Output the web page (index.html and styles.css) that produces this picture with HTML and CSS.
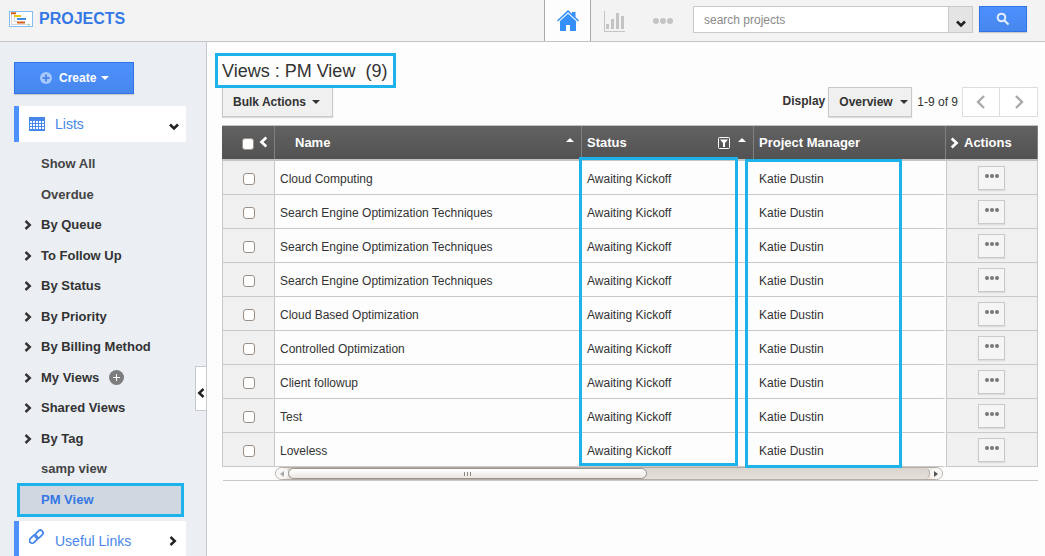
FILE: index.html
```html
<!DOCTYPE html>
<html lang="en">
<head>
<meta charset="utf-8">
<title>Projects</title>
<link rel="stylesheet" href="styles.css">
</head>
<body>
<svg class="defs" aria-hidden="true">
  <symbol id="right" viewBox="0 0 8 10"><path d="M1.5 1 5.8 5 1.5 9" fill="none" stroke="currentColor" stroke-width="2.4"/></symbol>
  <symbol id="left" viewBox="0 0 8 10"><path d="M6.5 1 2.2 5 6.5 9" fill="none" stroke="currentColor" stroke-width="2.4"/></symbol>
  <symbol id="down" viewBox="0 0 10 8"><path d="M1 1.5 5 5.5 9 1.5" fill="none" stroke="currentColor" stroke-width="2.6"/></symbol>
</svg>
<header class="topbar">
  <div class="brand">
    <svg class="brand-icon" viewBox="0 0 24 16" aria-hidden="true">
      <rect x=".5" y=".5" width="23" height="15" fill="#fff" stroke="#86bdf0"/>
      <path d="M2.5 3v10.5H20M5.500 4.500v6h3" fill="none" stroke="#ccc" stroke-width=".8"/>
      <path d="M2 1.200h5v2H2zM8 10.500h8v2H8z" fill="#d2601a"/>
      <path d="M5 4h7v2H5z" fill="#f0c419"/>
      <path d="M8 7h9v2H8z" fill="#3d8de5"/>
      <path d="M19 13h2v1.500h-2z" fill="#9fd6a5"/>
    </svg>
    <span>PROJECTS</span>
  </div>
  <nav class="tabs">
    <button class="tab tab-active" aria-label="Home"><svg width="22" height="22" viewBox="0 0 22 22"><path fill="#3690fb" d="M11 0 0 10.500l1 1L11 2.300l10 9.200 1-1-3.500-3.400V2H15v1.800z"/><path fill="#3690fb" d="M11 3.700 3 11v10h6v-6h4v6h6V11z"/></svg></button>
    <button class="tab" aria-label="Reports"><svg width="22" height="22" viewBox="0 0 22 22" fill="#c4c4c4"><path d="M0 1h1v20h20v1H0zM2 14h3v5H2zM7 9h3v10H7zM12 3h3v16h-3zM17 6h3v13h-3z"/></svg></button>
    <button class="tab" aria-label="More"><svg width="22" height="8" viewBox="0 0 22 8" fill="#c4c4c4"><circle cx="4" cy="4" r="3"/><circle cx="11" cy="4" r="3"/><circle cx="18" cy="4" r="3"/></svg></button>
  </nav>
  <form class="search">
    <input class="search-input" type="text" placeholder="search projects" aria-label="Search projects">
    <button class="search-menu" type="button" aria-label="Search options"><svg class="chev-down"><use href="#down"/></svg></button>
    <button class="search-go" type="button" aria-label="Search"><svg width="14" height="14" viewBox="0 0 14 14" fill="none" stroke="#e4eeff" stroke-width="2"><circle cx="5.500" cy="5.500" r="3.800"/><path d="m8.200 8.200 4.300 4.300"/></svg></button>
  </form>
</header>
<div class="layout">
  <aside class="sidebar">
    <button class="create"><svg width="12" height="12" viewBox="0 0 12 12"><circle cx="6" cy="6" r="6" fill="#a6c8ff"/><path d="M6 2.500v7M2.500 6h7" stroke="#4a88ee" stroke-width="2"/></svg><span>Create</span><span class="caret"></span></button>
    <a class="section" href="#">
      <svg class="section-icon" width="16" height="14" viewBox="0 0 16 14"><path fill="#4786ea" d="M0 0h16v14H0z"/><path fill="#fff" d="M1 4h2v2H1zM4 4h2v2H4zM7 4h2v2H7zM10 4h2v2h-2zM13 4h2v2h-2zM1 7h2v2H1zM4 7h2v2H4zM7 7h2v2H7zM10 7h2v2h-2zM13 7h2v2h-2zM1 10h2v2H1zM4 10h2v2H4zM7 10h2v2H7zM10 10h2v2h-2zM13 10h2v2h-2z"/></svg>
      <span class="section-name">Lists</span><svg class="chev-down section-down"><use href="#down"/></svg>
    </a>
    <ul class="views">
      <li><a class="leaf" href="#">Show All</a></li>
      <li><a class="leaf" href="#">Overdue</a></li>
      <li><svg class="chev"><use href="#right"/></svg><a href="#">By Queue</a></li>
      <li><svg class="chev"><use href="#right"/></svg><a href="#">To Follow Up</a></li>
      <li><svg class="chev"><use href="#right"/></svg><a href="#">By Status</a></li>
      <li><svg class="chev"><use href="#right"/></svg><a href="#">By Priority</a></li>
      <li><svg class="chev"><use href="#right"/></svg><a href="#">By Billing Method</a></li>
      <li><svg class="chev"><use href="#right"/></svg><a href="#">My Views</a><button class="add" aria-label="Add view"><svg width="15" height="15" viewBox="0 0 15 15"><circle cx="7.500" cy="7.500" r="7.500" fill="#7d7d7d"/><path d="M7.500 4v7M4 7.500h7" stroke="#fff"/></svg></button></li>
      <li><svg class="chev"><use href="#right"/></svg><a href="#">Shared Views</a></li>
      <li><svg class="chev"><use href="#right"/></svg><a href="#">By Tag</a></li>
      <li><a class="leaf" href="#">samp view</a></li>
      <li class="current"><a href="#">PM View</a></li>
    </ul>
    <a class="section" href="#">
      <svg class="section-icon" width="16" height="20" viewBox="0 0 16 20" fill="none" stroke="#4786ea" stroke-width="1.800"><rect x="5.500" y="2.500" width="9" height="5.400" rx="2.700" transform="rotate(-45 10 5.200)"/><rect x="0" y="7.500" width="9" height="5.400" rx="2.700" transform="rotate(-45 4.500 10.200)"/></svg>
      <span class="section-name">Useful Links</span><svg class="chev section-right"><use href="#right"/></svg>
    </a>
    <button class="collapse" aria-label="Collapse sidebar"><svg class="chev"><use href="#left"/></svg></button>
  </aside>
  <main class="main">
    <h1 class="title">Views : PM View&nbsp; (9)</h1>
    <div class="toolbar">
      <button class="bulk">Bulk Actions<span class="caret"></span></button>
      <label class="display-label" for="display">Display</label>
      <div class="picker"><select id="display"><option>Overview</option></select><span class="caret"></span></div>
      <span class="range">1-9 of 9</span>
      <div class="pager">
        <button aria-label="Previous page"><svg width="10" height="14" viewBox="0 0 10 14"><path d="M8 1 2 7l6 6" fill="none" stroke="#aaa" stroke-width="2.400"/></svg></button>
        <button aria-label="Next page"><svg width="10" height="14" viewBox="0 0 10 14"><path d="m2 1 6 6-6 6" fill="none" stroke="#aaa" stroke-width="2.400"/></svg></button>
      </div>
    </div>
    <table class="projects">
      <colgroup><col class="col-check"><col><col class="col-status"><col class="col-manager"><col class="col-actions"></colgroup>
      <thead>
        <tr>
          <th><div class="head head-check"><input type="checkbox" aria-label="Select all"><svg class="head-chev"><use href="#left"/></svg></div></th>
          <th><div class="head head-name">Name<span class="sort"></span></div></th>
          <th><div class="head">Status<svg class="filter" width="12" height="12" viewBox="0 0 12 12"><rect x=".5" y=".5" width="11" height="11" rx="1" fill="none" stroke="#fff"/><path d="M2 2.500h8L7 6v4H5V6z" fill="#fff"/></svg><span class="sort"></span></div><span class="mark mark-status"></span></th>
          <th><div class="head">Project Manager</div><span class="mark mark-manager"></span></th>
          <th><div class="head head-actions"><svg class="head-chev"><use href="#right"/></svg>Actions</div></th>
        </tr>
      </thead>
      <tbody id="rows"></tbody>
    </table>
    <div class="scroll">
      <div class="scrollbar"><span class="arrow arrow-left"></span><span class="track"><span class="thumb"><i></i><i></i><i></i></span></span><span class="arrow arrow-right"></span></div>
    </div>
  </main>
</div>
<script src="app.js"></script>
</body>
</html>
```
FILE: styles.css
```css
* { box-sizing: border-box; }
body { margin: 0; height: 100vh; overflow: hidden; display: flex; flex-direction: column; background: #fdfdfd; color: #333; font: 12px/16px "Liberation Sans", Arial, sans-serif; }
button, input, select { margin: 0; padding: 0; font: inherit; color: inherit; border-radius: 0; }
button { display: flex; align-items: center; }
svg { flex: none; display: block; }
a { color: inherit; text-decoration: none; }
.defs { position: absolute; width: 0; height: 0; }
.caret { border: 5px solid transparent; border-top-color: currentColor; border-bottom: 0; }
.chev { width: 8px; height: 10px; }
.chev-down { width: 10px; height: 8px; }

.topbar { display: flex; height: 42px; flex: none; background: #f3f3f3; border-bottom: 1px solid #c4c4c4; }
.brand { display: flex; flex: 1; align-items: center; gap: 6px; padding: 0 0 3px 9px; color: #3578e5; font-size: 16px; font-weight: bold; }
.brand-icon { width: 24px; height: 16px; }
.tabs { display: flex; }
.tab { width: 48px; justify-content: center; background: none; border: 0; }
.tab-active { width: 47px; background: #fdfdfd; border: solid #aaa; border-width: 0 1px; }
.search { display: flex; padding: 6px 18px 0 6px; }
.search-input { width: 256px; height: 27px; padding: 0 10px; background: #fff; border: 1px solid #c9c9c9; }
.search-input::placeholder { color: #8a8a8a; opacity: 1; }
.search-menu { width: 24px; height: 27px; justify-content: center; padding-top: 8px; background: #e4e4e4; border: 1px solid #c9c9c9; border-left: 0; color: #222; }
.search-go { width: 48px; height: 26px; margin-left: 6px; justify-content: center; background: linear-gradient(#4d90fe, #4787ed); border: 1px solid #2f74e8; box-shadow: 0 1px 1px #ccc; }

.layout { display: flex; flex: 1; min-height: 0; }
.sidebar { position: relative; width: 207px; flex: none; padding: 20px 20px 0 14px; background: #ebeff4; border-right: 1px solid #c6c9cd; }
.create { width: 120px; height: 32px; gap: 5px; padding-left: 25px; color: #fff; font-weight: bold; background: linear-gradient(#4d90fe, #4787ed); border: 1px solid #2f74e8; box-shadow: 0 1px 1px #ccc; }
.create span:first-of-type { margin-left: 2px; }
.create .caret { border-width: 4px 4px 0; }
.section { display: flex; align-items: center; height: 36px; padding: 0 7px 0 10px; background: #fff; border-left: 5px solid #4d90fe; color: #4786ea; font-size: 14px; }
.create + .section { margin-top: 12px; }
.section-icon { width: 16px; margin-right: 10px; }
.views + .section { padding-top: 4px; }
.views + .section .section-icon { margin-bottom: 4px; }
.section-name { flex: 1; }
.section-down, .section-right { color: #222; }
.section-down { margin-top: 6px; }
.section-right { margin-right: 2px; }
.views { list-style: none; margin: 0 2px 4px 3px; padding: 6px 0 0; font-size: 13px; font-weight: bold; color: #333; }
.views li { display: flex; align-items: center; height: 30px; padding: 2px 0 0 7px; }
.views li:nth-child(even) { height: 31px; }
.views .chev { margin-right: 9px; }
.leaf { margin-left: 17px; color: #444; }
.views li.current { height: 34px; padding: 0 0 0 21px; color: #3578e5; background: #d1d7e0; border: 3px solid #1cb2ea; }
.add { margin-left: 10px; background: none; border: 0; }
.collapse { position: absolute; right: 0; top: 324px; width: 11px; height: 45px; justify-content: center; padding-top: 8px; color: #222; background: #fff; border: 1px solid #c6c9cd; border-right: 0; }

.main { flex: 1; min-width: 0; padding: 11px 7px 0 15px; }
.title { position: relative; z-index: 1; width: max-content; margin: 0 0 -1px -7px; height: 35px; padding: 0 6px 0 4px; background: #fdfdfd; border: 3px solid #1cb2ea; font-size: 18px; line-height: 31px; font-weight: normal; }
.toolbar { display: flex; margin-bottom: 8px; }
.bulk { height: 30px; gap: 6px; padding: 0 12px 0 10px; font-weight: bold; background: #f0f0f0; border: 1px solid #c9c9c9; box-shadow: 0 1px 1px #ddd; }
.bulk .caret, .picker .caret { border-width: 4px 4px 0; }
.display-label { margin-left: auto; line-height: 28px; font-weight: bold; }
.picker { position: relative; margin-left: 3px; }
.picker select { display: block; width: 84px; height: 30px; padding-left: 10px; appearance: none; font-weight: bold; background: #f0f0f0; border: 1px solid #c9c9c9; box-shadow: 0 1px 1px #ddd; }
.picker .caret { position: absolute; right: 4px; top: 13px; pointer-events: none; }
.range { margin: 0 4px 0 5px; line-height: 30px; }
.pager { display: flex; }
.pager button { width: 38px; height: 30px; justify-content: center; background: #fff; border: 1px solid #ddd; }
.pager button + button { border-left: 0; }

.projects { width: 100%; table-layout: fixed; border-spacing: 0; }
.col-check { width: 53px; }
.col-status { width: 172px; }
.col-manager { width: 192px; }
.col-actions { width: 92px; }
th { position: relative; padding: 0; height: 36px; font-size: 13px; text-align: left; color: #fff; background: linear-gradient(#626262, #525252); border: solid #c4c4c4; border-width: 1px 0 2px; }
.head { display: flex; align-items: center; height: 33px; padding: 0 7px 0 5px; border-right: 1px solid #818181; }
.head-name { padding-left: 20px; }
.head-check { padding: 3px 0 0 20px; }
.head-chev { width: 9px; height: 12px; margin: 0 9px 4px 5px; }
.head-actions { padding-left: 0; }
.head-actions .head-chev { margin: 0 5px 0 4px; }
.sort { margin: 0 0 5px auto; border: 4px solid transparent; border-bottom-color: #fff; border-top: 0; }
.filter { margin: 0 8px 0 auto; }
.filter + .sort { margin-left: 0; }
td { height: 34px; padding: 3px 0 0 5px; background: #fdfdfd; border-bottom: 1px solid #c9c9c9; }
td:first-child { padding: 3px 0 0 20px; background: #f0f0f0; border-right: 1px solid #c9c9c9; border-left: 1px solid #c9c9c9; }
td:nth-child(4) { border-right: 3px solid #fdfdfd; }
td:last-child { padding: 0 0 0 31px; background: #f0f0f0; border-left: 1px solid #c9c9c9; border-right: 1px solid #c9c9c9; }
input[type="checkbox"] { display: block; flex: none; width: 12px; height: 12px; appearance: none; background: #fff; border: 1px solid #9a8f86; border-radius: 3px; }
.more { width: 27px; height: 24px; justify-content: center; padding-bottom: 3px; background: #f5f5f5; border: 1px solid #c9c9c9; box-shadow: 0 1px 1px #ddd; }
.mark { position: absolute; z-index: 1; border: 3px solid #1cb2ea; pointer-events: none; }
.mark-status { left: -3px; top: 31px; width: 159px; height: 309px; }
.mark-manager { left: -9px; top: 33px; width: 157px; height: 309px; }

.scroll { margin-left: 1px; padding: 0 95px 0 52px; border-bottom: 1px solid #c9c9c9; }
.scrollbar { display: flex; height: 13px; background: #ece9e5; border: 1px solid #b5aca4; border-radius: 7px; }
.track { flex: 1; background: linear-gradient(#d9d4ce, #e4e0db); border-right: 1px solid #b5aca4; border-radius: 0 7px 7px 0; }
.thumb { display: flex; align-items: center; justify-content: center; gap: 2px; width: 56%; height: 11px; background: linear-gradient(#fff, #eae7e3); border: 1px solid #9a918a; border-radius: 6px; }
.thumb i { width: 1px; height: 4px; background: #8d857e; }
.arrow { width: 12px; background: #f7f6f4; border-radius: 6px; }
.arrow::before { content: ""; display: block; margin: 3px 0 0 4px; width: 0; border: 3px solid transparent; }
.arrow-left::before { border-right: 4px solid #aaa; border-left: 0; }
.arrow-right::before { border-left: 4px solid #555; border-right: 0; }
```
FILE: app.js
```js
const names = [
  "Cloud Computing",
  "Search Engine Optimization Techniques",
  "Search Engine Optimization Techniques",
  "Search Engine Optimization Techniques",
  "Cloud Based Optimization",
  "Controlled Optimization",
  "Client followup",
  "Test",
  "Loveless"
];
const dots = '<svg width="14" height="4" viewBox="0 0 14 4" fill="#777"><circle cx="2" cy="2" r="2"/><circle cx="7" cy="2" r="2"/><circle cx="12" cy="2" r="2"/></svg>';
document.getElementById("rows").innerHTML = names.map(name => `<tr>
  <td><input type="checkbox" aria-label="Select ${name}"></td>
  <td>${name}</td><td>Awaiting Kickoff</td><td>Katie Dustin</td>
  <td><button class="more" aria-label="Actions for ${name}">${dots}</button></td>
</tr>`).join("");
```
